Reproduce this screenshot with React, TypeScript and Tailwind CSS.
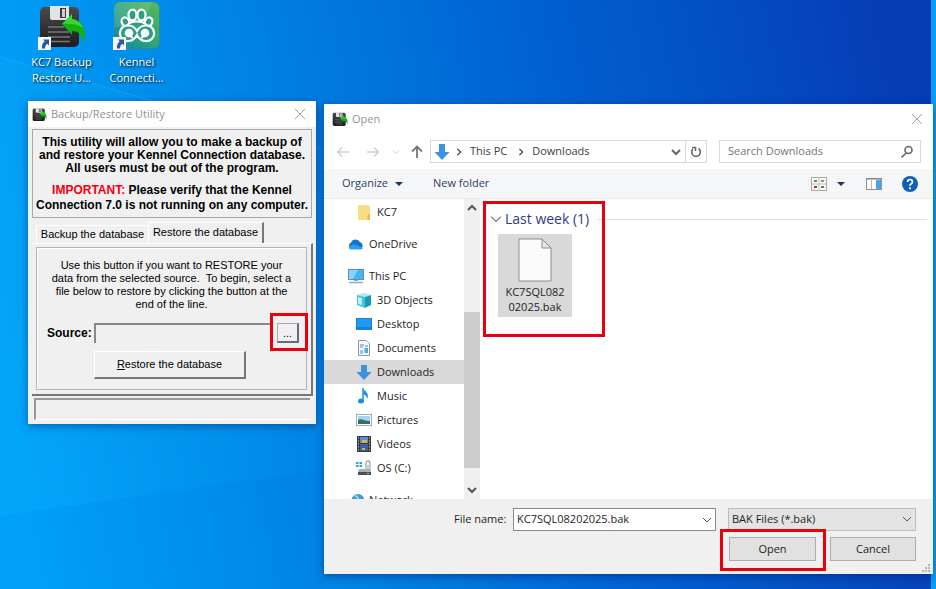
import type { ReactNode } from "react"

const legacyFont = "font-['Liberation_Sans',Arial,sans-serif]"

function FloppyIcon({ className }: { className?: string }) {
  return (
    <svg viewBox="0 0 48 48" className={className} aria-hidden="true">
      <defs>
        <linearGradient id="floppy" x1="0" y1="0" x2="0" y2="1">
          <stop offset="0" stopColor="#4a4a4e" />
          <stop offset="1" stopColor="#1c1c1f" />
        </linearGradient>
      </defs>
      <rect x="2" y="5" width="39" height="40" rx="5" fill="url(#floppy)" />
      <path d="M12 4h19v12q0 2-2 2H14q-2 0-2-2z" fill="#e3e3e6" />
      <rect x="22" y="6" width="6" height="10" fill="#3a3a3d" />
      <rect x="24" y="7" width="3" height="8" fill="#d0d0d4" />
      <path d="M10 25h16M10 30h21M10 35h22M13 39.500h19" stroke="#77777b" strokeWidth="1.300" />
      <path d="M24 22 34 12v5c10 1 15 9 12 23-3-8-6-11-12-11v4z" fill="#12b012" />
      <path d="M24 22 34 12v5c6 1 9 4 11 9-5-4-12-5-21-4z" fill="#3ad62e" />
    </svg>
  )
}

function KennelIcon({ className }: { className?: string }) {
  return (
    <svg viewBox="0 0 48 48" className={className} aria-hidden="true">
      <defs>
        <linearGradient id="kennel" x1="1" y1="0" x2="0" y2="1">
          <stop offset="0" stopColor="#57b957" />
          <stop offset="0.500" stopColor="#2fa57c" />
          <stop offset="1" stopColor="#0d88a0" />
        </linearGradient>
      </defs>
      <rect x="2" y="1" width="45" height="46" rx="6" fill="#2f8f84" />
      <rect x="1" y="0" width="45" height="46" rx="6" fill="url(#kennel)" />
      <path d="M1 6a6 6 0 0 1 6-6h32C37 13 22 24 1 25z" fill="#fff" opacity=".12" />
      <g fill="#2b9f80" stroke="#fff" strokeWidth="2.200">
        <ellipse cx="12.500" cy="20" rx="3.700" ry="4.700" transform="rotate(-25 12.500 20)" />
        <ellipse cx="35.500" cy="20" rx="3.700" ry="4.700" transform="rotate(25 35.500 20)" />
        <ellipse cx="19.500" cy="13" rx="4" ry="5.300" />
        <ellipse cx="28.500" cy="13" rx="4" ry="5.300" />
        <path d="M14 24c3-6 17-6 20 0" />
        <path d="M24 33c-2 4-5 6-8.500 6a7.800 7.800 0 1 1 0-15.500c3.500 0 6.500 2 8.500 5.500 2-3.500 5-5.500 8.500-5.500a7.800 7.800 0 1 1 0 15.500C29 39 26 37 24 33z" />
      </g>
      <circle cx="16" cy="31" r="4.300" fill="#fff" />
      <circle cx="32" cy="31" r="4.300" fill="#fff" />
      <path d="m17 34 3 2M31 34l-3 2" stroke="#fff" strokeWidth="2" />
    </svg>
  )
}

function ShortcutBadge() {
  return (
    <svg viewBox="0 0 13 13" className="absolute bottom-0 left-0 size-[13px]" aria-hidden="true">
      <rect width="13" height="13" fill="#f4f6fa" />
      <path d="M5 2.500h6v6L9.200 6.700C7.500 8 7 9.500 7 11.500H4C3.500 8.500 4.500 6.300 6.700 4.300z" fill="#2c56a0" />
    </svg>
  )
}

function Wallpaper() {
  return (
    <svg
      viewBox="0 0 936 589"
      preserveAspectRatio="none"
      className="absolute inset-0 size-full"
      aria-hidden="true"
    >
      <defs>
        <linearGradient id="sky" gradientUnits="userSpaceOnUse" x1="0" y1="400" x2="930" y2="220">
          <stop offset="0" stopColor="#00a4fb" />
          <stop offset="0.300" stopColor="#0085e6" />
          <stop offset="0.600" stopColor="#0064d4" />
          <stop offset="1" stopColor="#063cb6" />
        </linearGradient>
        <linearGradient id="ray" x1="0" y1="0" x2="1" y2="0">
          <stop offset="0" stopColor="#19b0ff" stopOpacity=".45" />
          <stop offset="1" stopColor="#19b0ff" stopOpacity="0" />
        </linearGradient>
      </defs>
      <rect width="936" height="589" fill="url(#sky)" />
      <path d="M0 57 400 168V460L0 516z" fill="url(#ray)" opacity=".3" />
      <path d="M0 57 330 152" stroke="#4cc0ff" strokeOpacity=".25" />
      <path d="M0 516 330 468V589H0z" fill="#0078e0" opacity=".08" />
      <rect x="931" width="5" height="589" fill="#00a0f4" />
    </svg>
  )
}

function CloseButton() {
  return (
    <button type="button" aria-label="Close" className="p-1">
      <svg viewBox="0 0 12 12" className="size-3" stroke="#a0a0a0" fill="none">
        <path d="m1 1 10 10M11 1 1 11" />
      </svg>
    </button>
  )
}

function Chevron({ className }: { className?: string }) {
  return (
    <svg viewBox="0 0 10 10" className={className} fill="none" stroke="currentColor" aria-hidden="true">
      <path d="m1 3 4 4 4-4" />
    </svg>
  )
}

function Highlight({ className }: { className: string }) {
  return <div className={`pointer-events-none absolute border-[#e9000b] ${className}`} />
}

function DesktopShortcut({ icon, lines }: { icon: ReactNode; lines: string[] }) {
  return (
    <button type="button" className="flex w-[75px] flex-col items-center text-white">
      <span className="relative block">
        {icon}
        <ShortcutBadge />
      </span>
      <span className="mt-1 text-[11px] leading-4 [text-shadow:1px_1px_2px_#000]">
        {lines.map((line) => (
          <span key={line} className="block whitespace-nowrap">
            {line}
          </span>
        ))}
      </span>
    </button>
  )
}

function DownArrow({ className }: { className?: string }) {
  return (
    <svg viewBox="0 0 16 16" className={className} aria-hidden="true">
      <path d="M5 0h6v8h4.500L8 16 .500 8H5z" fill="#3a93e0" />
    </svg>
  )
}

const icons: Record<string, ReactNode> = {
  folder: (
    <>
      <path d="M2 1h9l3 1v14H2z" fill="#f9dd83" />
      <path d="M12 10h2v6h-3z" fill="#e8bd52" />
    </>
  ),
  cloud: (
    <>
      <path d="M3.500 13A3.500 3.500 0 0 1 3 6.500 5 5 0 0 1 12 6a4 4 0 0 1 1 7z" fill="#1573cc" />
      <path d="M1 12c1-3 4-4 7-3l7 3q-1 1.500-3 1.500H3Q1.500 13.500 1 12z" fill="#2c9ff0" />
    </>
  ),
  pc: (
    <>
      <rect x=".5" y="1.500" width="15" height="10" fill="#46b4f0" stroke="#5a8fb8" />
      <path d="M1 2h9L5 11H1z" fill="#85d2fa" />
      <path d="M6 12h4v1H6z" fill="#9ab" />
      <path d="M1 14.500h14" stroke="#8ba9c4" strokeWidth="1.500" />
    </>
  ),
  cube: (
    <>
      <path d="m1 3 7-2 7 2-6 2z" fill="#a8eaf2" />
      <path d="m1 3 8 2v11l-8-3z" fill="#46c3d8" />
      <path d="m9 5 6-2v10l-6 3z" fill="#179ab8" />
      <path d="m2 5 4 1v7l-4-1z" fill="#b9f0f6" />
    </>
  ),
  desktop: (
    <>
      <rect y="2" width="16" height="12" fill="#1383d8" />
      <path d="M1 3h14v8H1z" fill="#1f9bf2" />
    </>
  ),
  document: (
    <>
      <path d="M2.500.500h8l3 3v12h-11z" fill="#f6fafd" stroke="#8b9aa8" />
      <path d="M4 5h4M4 7h3M9 6h3M4 11h3M4 13h3" stroke="#3996d8" strokeWidth="1.200" />
      <path d="M8.500 8h3.500v5H8.500z" fill="#51a7de" />
    </>
  ),
  download: <path d="M5 1h6v7h4.500L8 16 .500 8H5z" fill="#3a93e0" />,
  music: (
    <>
      <path d="M7.500 0c.5 3 4.500 4 4.500 8 0 1-.5 2-1 3 0-3-2-4-3.500-4.500z" fill="#1b8fe6" />
      <path d="M7 0v13" stroke="#1b8fe6" strokeWidth="1.500" />
      <ellipse cx="5" cy="13" rx="3" ry="2.500" fill="#1b8fe6" />
    </>
  ),
  picture: (
    <>
      <rect x=".5" y="2.500" width="15" height="11" fill="#fff" stroke="#a4aab0" />
      <path d="M2 4h12v8H2z" fill="#a5d5f4" />
      <path d="M2 8c3-2 5 1 12 1v3H2z" fill="#33705e" />
    </>
  ),
  video: (
    <>
      <path d="M1 0h14v16H1z" fill="#38383d" />
      <path d="M4 1h8v6H4z" fill="#598fcc" />
      <path d="M4 8h8v7H4z" fill="#3a61a5" />
      <path d="M6 4h5v3H6zM6 12h3v2H6z" fill="#e1b23c" />
      <path d="M2.500 1v14M13.500 1v14" stroke="#a9a9b0" strokeDasharray="1.500 1.500" />
    </>
  ),
  drive: (
    <>
      <path d="M0 2h2.500v2H0zM3.500 2H6v2H3.500zM0 5h2.500v2H0zM3.500 5H6v2H3.500z" fill="#22a7dc" />
      <path d="M10 6V3.500Q10 1 12 1t2 2.500V6" fill="none" stroke="#a0a5aa" strokeWidth="1.300" />
      <path d="M9 5h6v5H9z" fill="#c8cdd2" />
      <path d="m3 9h11l1 3H2z" fill="#a9afb5" />
      <path d="M2 12h13v3H2z" fill="#4a5056" />
      <path d="M11 13.500h2" stroke="#6be06b" />
    </>
  ),
  network: (
    <>
      <circle cx="10" cy="8.500" r="6.500" fill="#3d9fd6" />
      <path d="M7 4q3 0 3 3l4 2" stroke="#a3dcf2" strokeWidth="1.500" fill="none" />
      <path d="M0 8h9v6H0z" fill="#65b8e6" />
    </>
  ),
}

const places = [
  { name: "KC7", icon: "folder", nested: true, group: true },
  { name: "OneDrive", icon: "cloud", nested: false, group: true },
  { name: "This PC", icon: "pc", nested: false, group: false },
  { name: "3D Objects", icon: "cube", nested: true, group: false },
  { name: "Desktop", icon: "desktop", nested: true, group: false },
  { name: "Documents", icon: "document", nested: true, group: false },
  { name: "Downloads", icon: "download", nested: true, group: false },
  { name: "Music", icon: "music", nested: true, group: false },
  { name: "Pictures", icon: "picture", nested: true, group: false },
  { name: "Videos", icon: "video", nested: true, group: false },
  { name: "OS (C:)", icon: "drive", nested: true, group: true },
  { name: "Network", icon: "network", nested: false, group: false },
]

function BackupWindow() {
  return (
    <section className="absolute left-7 top-[101px] w-72 bg-[#f0f0f0] pb-1 shadow-[0_2px_8px_rgba(0,20,80,0.45)]">
      <header className="flex h-[26px] items-center bg-white pl-1 pr-1.5">
        <FloppyIcon className="size-[15px]" />
        <h1 className="ml-1 grow text-[11px] text-[#929292]">Backup/Restore Utility</h1>
        <CloseButton />
      </header>

      <div className={`px-1 pt-0.5 text-black ${legacyFont}`}>
        <div className="whitespace-nowrap border border-[#a8a8a8] pb-1 pt-1.5 text-center text-xs font-bold">
          <p className="leading-[13px]">
            This utility will allow you to make a backup of
            <br />
            and restore your Kennel Connection database.
            <br />
            All users must be out of the program.
          </p>
          <p className="mt-2 leading-[15px]">
            <span className="text-[#f5000c]">IMPORTANT:</span> Please verify that the Kennel
            <br />
            Connection 7.0 is not running on any computer.
          </p>
        </div>

        <div role="tablist" className="flex items-end pl-1 pt-1 text-[11px]">
          <button type="button" role="tab" aria-selected="false" className="h-[18px] w-[112px] border-l border-t border-white">
            Backup the database
          </button>
          <button
            type="button"
            role="tab"
            aria-selected="true"
            className="h-[21px] w-[116px] border-l border-r-2 border-t border-l-white border-r-[#777] border-t-white pb-0.5"
          >
            Restore the database
          </button>
        </div>

        <div className="-mr-px border-b-2 border-r-2 border-t border-b-[#777] border-r-[#777] border-t-white px-1 pb-1 pt-[3px]">
          <div className="border border-[#b4b4b4] px-2 pb-2.5 pt-[11px] shadow-[inset_1px_1px_0_#fff]">
            <p className="whitespace-nowrap text-center text-[11px] leading-[13px]">
              Use this button if you want to RESTORE your
              <br />
              data from the selected source.&nbsp; To begin, select a
              <br />
              file below to restore by clicking the button at the
              <br />
              end of the line.
            </p>
            <div className="-mr-[5px] ml-0.5 mt-3 flex items-center">
              <label htmlFor="source" className="w-[47px] text-xs font-bold">
                Source:
              </label>
              <input
                id="source"
                className="h-5 min-w-0 grow border-l-2 border-t-2 border-[#888] bg-[#f0f0f0] px-1 text-[11px]"
              />
              <div className="relative">
                <button
                  type="button"
                  aria-label="Browse"
                  className="mx-1 block h-5 w-[22px] border-b-2 border-l border-r-2 border-t border-b-[#666c80] border-l-[#aaa] border-r-[#666c80] border-t-[#aaa] text-[11px] leading-3"
                >
                  ...
                </button>
                <Highlight className="-bottom-2 -left-[3px] -right-[5px] -top-2.5 border-[3px]" />
              </div>
            </div>
            <button
              type="button"
              className="ml-[49px] mt-2 block h-7 w-[152px] border-b-2 border-l border-r-2 border-t border-b-[#777] border-l-white border-r-[#777] border-t-white text-[11px]"
            >
              <span className="underline">R</span>estore the database
            </button>
          </div>
        </div>
        <div role="status" className="mx-0.5 mt-0.5 h-[22px] border-b border-l-2 border-t-2 border-[#999] border-b-white" />
      </div>
    </section>
  )
}

function AddressBar() {
  return (
    <div className="flex h-[23px] items-center pl-3 pr-3 text-[#3c3c3c]">
      <button type="button" aria-label="Back">
        <svg viewBox="0 0 14 14" className="size-3.5" fill="none" stroke="#cfcfcf" strokeWidth="1.400">
          <path d="M13 7H1.500M6 2.500 1.500 7 6 11.500" />
        </svg>
      </button>
      <button type="button" aria-label="Forward" className="ml-4">
        <svg viewBox="0 0 14 14" className="size-3.5" fill="none" stroke="#cfcfcf" strokeWidth="1.400">
          <path d="M1 7h11.500M8 2.500 12.500 7 8 11.500" />
        </svg>
      </button>
      <button type="button" aria-label="Recent locations" className="ml-3 text-[#c4c4c4]">
        <Chevron className="size-2" />
      </button>
      <button type="button" aria-label="Up" className="ml-2.5">
        <svg viewBox="0 0 14 14" className="size-3.5" fill="none" stroke="#777" strokeWidth="1.800">
          <path d="M7 13V1.500M2 6.500l5-5 5 5" />
        </svg>
      </button>
      <nav className="ml-1.5 flex h-full min-w-0 grow items-center border border-[#d9d9d9] pl-[3px] text-[11px]">
        <DownArrow className="size-4" />
        <Chevron className="ml-[5px] size-2 -rotate-90 stroke-[1.5]" />
        <a href="#this-pc" className="ml-[7px]">
          This PC
        </a>
        <Chevron className="ml-2.5 size-2 -rotate-90 stroke-[1.5]" />
        <a href="#downloads" className="ml-[7px] grow">
          Downloads
        </a>
        <button type="button" aria-label="Previous locations" className="px-1 text-[#666]">
          <Chevron className="size-2.5 stroke-2" />
        </button>
        <button type="button" aria-label="Refresh" className="h-full border-l border-[#d9d9d9] px-1">
          <svg viewBox="0 0 12 12" className="size-3" fill="none" stroke="#666" strokeWidth="1.600">
            <path d="M8.500 2.500A4.300 4.300 0 1 1 3 3M2 1.500H5.500V5" />
          </svg>
        </button>
      </nav>
      <div className="ml-3 flex h-full w-[202px] items-center border border-[#d9d9d9] pl-2 pr-1.5">
        <input
          type="search"
          aria-label="Search Downloads"
          placeholder="Search Downloads"
          className="min-w-0 grow text-[11px] placeholder:text-[#767676]"
        />
        <svg viewBox="0 0 14 14" className="size-3.5 shrink-0" fill="none" stroke="#666" strokeWidth="1.600" aria-hidden="true">
          <circle cx="8.500" cy="5" r="3.500" />
          <path d="M6 8 1.500 12.500" />
        </svg>
      </div>
    </div>
  )
}

function Toolbar() {
  return (
    <div className="mt-1.5 flex h-[30px] shrink-0 items-center border-b border-[#ebebeb] bg-[#f5f6f7] pl-[18px] pr-[15px] text-[11px] text-[#2b4263]">
      <button type="button" className="flex items-center gap-[7px]">
        Organize
        <svg viewBox="0 0 8 4" className="h-1 w-2" fill="#1f3350" aria-hidden="true">
          <path d="M0 0h8L4 4z" />
        </svg>
      </button>
      <button type="button" className="ml-[30px]">
        New folder
      </button>
      <button type="button" aria-label="Change your view" className="ml-auto flex items-center gap-2.5">
        <svg viewBox="0 0 16 14" className="h-3.5 w-4">
          <rect x=".5" y=".5" width="15" height="13" fill="#fbfbf6" stroke="#aaa9a2" />
          <path d="M8 1v12M1 7h14" stroke="#c2c1b8" />
          <path d="M3 3h3v2H3z" fill="#4b8f91" />
          <path d="M10 3h3v2h-3z" fill="#8b9490" />
          <path d="M3 9h3v2H3z" fill="#a73540" />
          <path d="M10 9h3v2h-3z" fill="#66708a" />
        </svg>
        <svg viewBox="0 0 8 4" className="h-1 w-2" fill="#1f3350">
          <path d="M0 0h8L4 4z" />
        </svg>
      </button>
      <button type="button" aria-label="Show the preview pane" className="ml-[21px]">
        <svg viewBox="0 0 16 12" className="h-3 w-4">
          <rect x=".5" y=".5" width="15" height="11" fill="#fff" stroke="#8d9096" />
          <path d="M0 1h16" stroke="#777b82" />
          <path d="M5.500 1v10" stroke="#b5b5b5" />
          <path d="M10 2h5v9h-5z" fill="#4aa3ea" />
        </svg>
      </button>
      <button type="button" aria-label="Help" className="ml-5">
        <svg viewBox="0 0 16 16" className="size-4">
          <circle cx="8" cy="8" r="8" fill="#0f5fb8" />
          <path d="M5.500 6q0-2.500 2.500-2.500T10.500 6Q10.500 7 9 8T8 10" fill="none" stroke="#fff" strokeWidth="1.700" />
          <circle cx="8" cy="12.300" r="1.100" fill="#fff" />
        </svg>
      </button>
    </div>
  )
}

function PlacesTree() {
  return (
    <div className="flex w-[156px] shrink-0 overflow-hidden text-[#1e1e1e]">
      <ul className="min-w-0 grow pt-px text-[11px]">
        {places.map((place) => (
          <li key={place.name} className={place.group ? "mb-2" : ""}>
            <button
              type="button"
              className={`flex h-6 w-full items-center gap-[5px] ${place.nested ? "pl-8" : "pl-6"} ${
                place.name === "Downloads" ? "bg-[#d9d9d9]" : ""
              }`}
            >
              <svg viewBox="0 0 16 16" className="size-4 shrink-0" aria-hidden="true">
                {icons[place.icon]}
              </svg>
              {place.name}
            </button>
          </li>
        ))}
      </ul>
      <div className="flex w-4 shrink-0 flex-col items-center bg-[#f0f0f0] py-1 text-[#555]">
        <Chevron className="size-2.5 shrink-0 rotate-180 stroke-2" />
        <div className="mt-[99px] w-full grow bg-[#cdcdcd]" />
        <Chevron className="mt-[17px] size-2.5 shrink-0 stroke-2" />
      </div>
    </div>
  )
}

function FileList() {
  return (
    <div className="relative min-w-0 grow pl-2.5 pr-1.5 pt-2">
      <button type="button" className="flex w-full items-center text-sm leading-6 text-[#2d3b8d]">
        <Chevron className="mr-[3px] size-3 text-[#777]" />
        Last week (1)
        <span className="ml-2 h-px grow bg-[#e3e3e3]" />
      </button>
      <button type="button" className="ml-2 mt-[3px] flex w-[74px] flex-col items-center bg-[#d9d9d9] pb-[3px] pt-1 text-[11px] leading-[15px] text-[#1e1e1e]">
        <svg viewBox="0 0 34 44" className="mb-0.5 h-11 w-[34px]" aria-hidden="true">
          <path d="M1 1h23l9 9v33H1z" fill="#fbfbfb" stroke="#8c8c8c" />
          <path d="M24 1v9h9z" fill="#e4e4e4" stroke="#8c8c8c" />
        </svg>
        <span>KC7SQL082</span>
        <span>02025.bak</span>
      </button>
      <Highlight className="left-[3px] top-0.5 h-[136px] w-[122px] border-[3px]" />
    </div>
  )
}

function OpenDialog() {
  return (
    <section className="absolute bottom-[15px] left-[324px] right-[3px] top-[104px] flex min-h-[300px] flex-col bg-white shadow-[0_2px_8px_rgba(0,20,80,0.45)]">
      <header className="flex h-[30px] shrink-0 items-center pl-2 pr-1.5">
        <FloppyIcon className="size-4" />
        <h2 className="ml-1 grow text-[11px] text-[#929292]">Open</h2>
        <CloseButton />
      </header>
      <div className="pt-1.5">
        <AddressBar />
      </div>
      <Toolbar />

      <div className="flex min-h-0 grow overflow-hidden">
        <PlacesTree />
        <FileList />
      </div>

      <footer className="relative shrink-0 bg-[#f0f0f0] pb-[13px] pl-[130px] pr-[17px] pt-[9px] text-[11px] text-[#1e1e1e]">
        <div className="flex items-center">
          <label htmlFor="file-name" className="w-[54px] whitespace-nowrap">
            File name:
          </label>
          <div className="ml-[5px] flex h-[23px] min-w-0 grow items-center border border-[#8a8a8a] bg-white pl-[3px] pr-[3px]">
            <input id="file-name" defaultValue="KC7SQL08202025.bak" className="min-w-0 grow" />
            <button type="button" aria-label="Show recent files" className="text-[#555]">
              <Chevron className="size-2.5" />
            </button>
          </div>
          <div className="relative ml-3 w-[188px] text-[#555]">
            <select aria-label="File type" className="block h-[23px] w-full appearance-none border border-[#bcbcbc] bg-[#e3e3e3] pl-[3px] text-[#1e1e1e]">
              <option>BAK Files (*.bak)</option>
            </select>
            <Chevron className="pointer-events-none absolute right-1 top-1.5 size-2.5" />
          </div>
        </div>
        <div className="mt-1.5 flex justify-end gap-3.5">
          <div className="relative">
            <button type="button" className="block h-6 w-[87px] border border-[#adadad] bg-[#e1e1e1]">
              Open
            </button>
            <Highlight className="-bottom-2.5 -left-[9px] -right-2.5 -top-2 border-[3px]" />
          </div>
          <button type="button" className="h-6 w-[86px] border border-[#adadad] bg-[#e1e1e1]">
            Cancel
          </button>
        </div>
        <svg viewBox="0 0 9 9" className="absolute bottom-px right-0.5 size-[9px]" fill="#b5b5b5" aria-hidden="true">
          <path d="M6 0h2v2H6zM3 3h2v2H3zM6 3h2v2H6zM0 6h2v2H0zM3 6h2v2H3zM6 6h2v2H6z" />
        </svg>
      </footer>
    </section>
  )
}

export default function App() {
  return (
    <main className="relative min-h-screen overflow-hidden font-['Open_Sans','Noto_Sans',sans-serif]">
      <Wallpaper />
      <div className="relative flex pl-6 pt-0.5">
        <DesktopShortcut icon={<FloppyIcon className="h-12 w-12" />} lines={["KC7 Backup", "Restore U..."]} />
        <DesktopShortcut icon={<KennelIcon className="h-12 w-12" />} lines={["Kennel", "Connecti..."]} />
      </div>
      <BackupWindow />
      <OpenDialog />
    </main>
  )
}
